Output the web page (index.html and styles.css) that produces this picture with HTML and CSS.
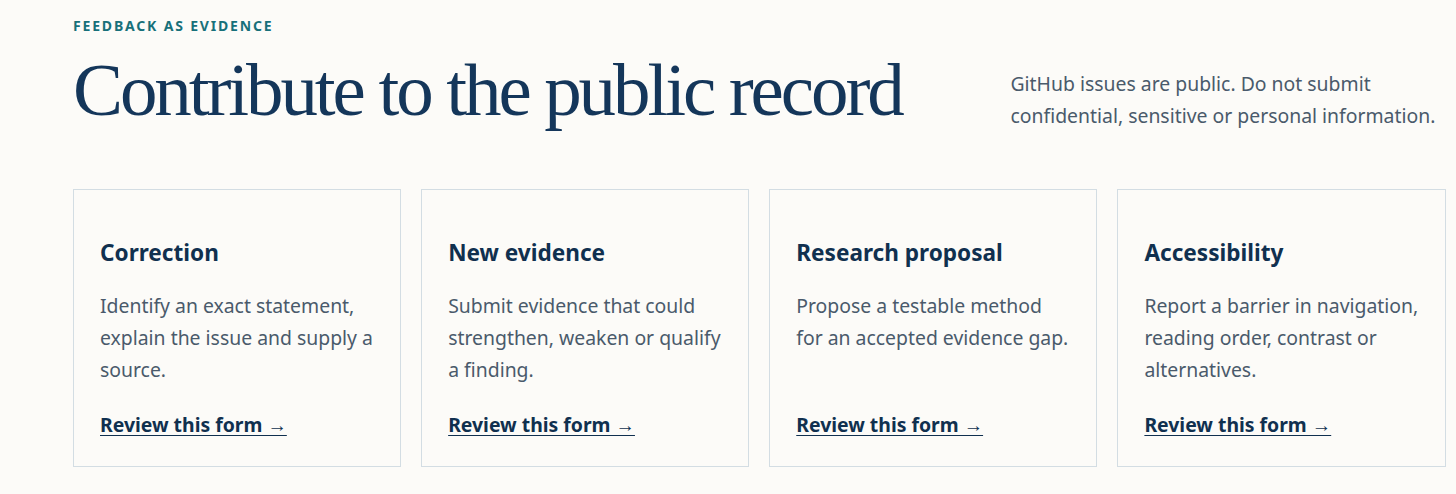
FILE: index.html
```html
<!DOCTYPE html>
<html lang="en">
<head>
<meta charset="utf-8">
<title>Feedback as evidence</title>
<link rel="stylesheet" href="styles.css">
</head>
<body>
<main class="page">
  <p class="eyebrow">FEEDBACK AS EVIDENCE</p>
  <header class="header">
    <h1 class="title">Contribute to the public record</h1>
    <p class="note">GitHub issues are public. Do not submit confidential, sensitive or personal information.</p>
  </header>
  <section class="cards">
    <article class="card">
      <h2 class="card-title">Correction</h2>
      <p class="card-text">Identify an exact statement, explain the issue and supply a source.</p>
      <a class="card-link" href="#">Review this form →</a>
    </article>
    <article class="card">
      <h2 class="card-title">New evidence</h2>
      <p class="card-text">Submit evidence that could strengthen, weaken or qualify a finding.</p>
      <a class="card-link" href="#">Review this form →</a>
    </article>
    <article class="card">
      <h2 class="card-title">Research proposal</h2>
      <p class="card-text">Propose a testable method for an accepted evidence gap.</p>
      <a class="card-link" href="#">Review this form →</a>
    </article>
    <article class="card">
      <h2 class="card-title">Accessibility</h2>
      <p class="card-text">Report a barrier in navigation, reading order, contrast or alternatives.</p>
      <a class="card-link" href="#">Review this form →</a>
    </article>
  </section>
</main>
</body>
</html>
```

FILE: styles.css
```css
* { box-sizing: border-box; }
html, body { margin: 0; background: #fcfbf8; }
body {
  font-family: "Noto Sans", "Liberation Sans", sans-serif;
  color: #4a5a6b;
  overflow: hidden;
}
.page {
  width: 1445.5px;
  padding: 16px 0 0 73px;
}
.eyebrow {
  margin: 0;
  font-size: 14px;
  line-height: 20px;
  font-weight: 700;
  letter-spacing: 0.13em;
  color: #17707a;
}
.header {
  display: flex;
  justify-content: space-between;
  align-items: flex-end;
  margin-top: 13px;
}
.title {
  margin: 0;
  font-family: "Liberation Serif", "Times New Roman", serif;
  font-weight: 400;
  font-size: 75px;
  line-height: 1.1;
  letter-spacing: -3.1px;
  color: #14365a;
}
.note {
  margin: 0;
  width: 435px;
  font-size: 19.4px;
  line-height: 32px;
  color: #4a5a6b;
}
.cards {
  display: grid;
  grid-template-columns: repeat(4, 1fr);
  gap: 20px;
  margin-top: 57px;
}
.card {
  display: flex;
  flex-direction: column;
  border: 1px solid #d3dde3;
  padding: 48px 26px 25px;
  min-height: 278px;
}
.card-title {
  margin: 0;
  font-size: 22.6px;
  line-height: 29px;
  font-weight: 700;
  color: #10304f;
}
.card-text {
  margin: 23px 0 0;
  font-size: 19.4px;
  line-height: 32px;
  color: #4a5a6b;
}
.card-link {
  margin-top: auto;
  align-self: flex-start;
  font-size: 19.4px;
  line-height: 32px;
  font-weight: 700;
  color: #10304f;
  text-decoration: underline;
  text-underline-offset: 3px;
}
```
